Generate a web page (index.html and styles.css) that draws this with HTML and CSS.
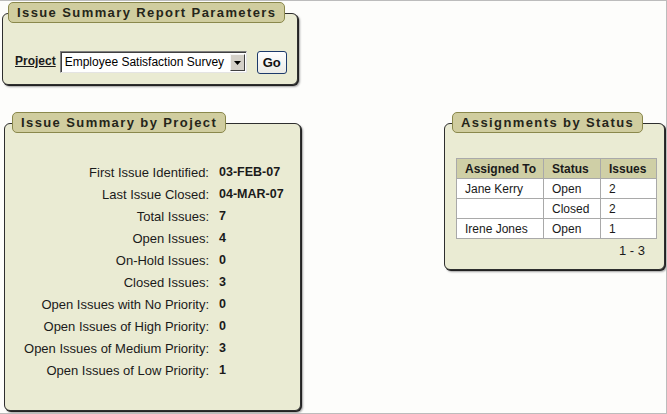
FILE: index.html
```html
<html lang="en">
<head>
    <meta charset="UTF-8">
    <title>Issue Summary Report</title>
    <link rel="stylesheet" href="styles.css">
</head>
<body>

<div class="region region-params">
    <div class="region-title">Issue Summary Report Parameters</div>
    <div class="region-body params">
        <a class="field-label" href="#">Project</a>
        <div class="select">
            <span class="select-text">Employee Satisfaction Survey</span>
            <span class="select-arrow">
                <svg width="7" height="4" viewBox="0 0 7 4"><path d="M0 0h7L3.5 4z" fill="#000"/></svg>
            </span>
        </div>
        <button class="go-btn">Go</button>
    </div>
</div>

<div class="summary-row">
    <div class="region region-summary">
        <div class="region-title">Issue Summary by Project</div>
        <div class="region-body stats">
            <span class="stat-label">First Issue Identified:</span><span class="stat-value">03-FEB-07</span>
            <span class="stat-label">Last Issue Closed:</span><span class="stat-value">04-MAR-07</span>
            <span class="stat-label">Total Issues:</span><span class="stat-value">7</span>
            <span class="stat-label">Open Issues:</span><span class="stat-value">4</span>
            <span class="stat-label">On-Hold Issues:</span><span class="stat-value">0</span>
            <span class="stat-label">Closed Issues:</span><span class="stat-value">3</span>
            <span class="stat-label">Open Issues with No Priority:</span><span class="stat-value">0</span>
            <span class="stat-label">Open Issues of High Priority:</span><span class="stat-value">0</span>
            <span class="stat-label">Open Issues of Medium Priority:</span><span class="stat-value">3</span>
            <span class="stat-label">Open Issues of Low Priority:</span><span class="stat-value">1</span>
        </div>
    </div>

    <div class="region region-status">
        <div class="region-title">Assignments by Status</div>
        <div class="region-body status">
            <table class="status-table">
                <thead>
                    <tr>
                        <th class="col-assigned">Assigned To</th>
                        <th class="col-status">Status</th>
                        <th class="col-issues">Issues</th>
                    </tr>
                </thead>
                <tbody>
                    <tr><td>Jane Kerry</td><td>Open</td><td>2</td></tr>
                    <tr><td></td><td>Closed</td><td>2</td></tr>
                    <tr><td>Irene Jones</td><td>Open</td><td>1</td></tr>
                </tbody>
            </table>
            <div class="pagination">1 - 3</div>
        </div>
    </div>
</div>

</body>
</html>
```

FILE: styles.css
```css
* {
    box-sizing: border-box;
}

body {
    margin: 0;
    width: 667px;
    height: 414px;
    border-top: 1px solid #bcbcbc;
    border-right: 1px solid #bcbcbc;
    border-bottom: 1px solid #bcbcbc;
    background-color: #fdfdfb;
    font-family: "Liberation Sans", Arial, sans-serif;
    font-size: 12px;
    color: #1a1a1a;
    overflow: hidden;
}

/* Regions */
.region {
    display: flex;
    flex-direction: column;
    align-items: flex-start;
}

.region-title {
    position: relative;
    z-index: 1;
    height: 21px;
    margin-left: 8px;
    padding: 0 8px;
    border: 1px solid #8a884c;
    border-radius: 5px;
    background-color: #d0cd9f;
    color: #25251a;
    font-size: 13px;
    font-weight: bold;
    letter-spacing: 1.4px;
    line-height: 19px;
    white-space: nowrap;
}

.region-body {
    margin-top: -10px;
    border: 1px solid #2e2e2e;
    border-radius: 6px;
    background-color: #eaebd3;
    box-shadow: 1px 1px 0 #222, 2px 2px 2px #a0a0a0;
}

.region-params {
    margin: 1px 0 0 2px;
    width: 296px;
}

.region-params .region-title {
    margin-left: 6px;
}

.params {
    width: 296px;
    height: 72px;
    display: flex;
    align-items: flex-start;
    padding: 37px 0 0 12px;
}

.field-label {
    font-weight: bold;
    font-size: 12px;
    color: #1a1a1a;
    line-height: 21px;
}

.select {
    display: flex;
    width: 187px;
    height: 22px;
    margin-left: 4px;
    border: 1px solid;
    border-color: #808080 #e4e4e4 #e4e4e4 #808080;
    background-color: #fff;
    box-shadow: inset 1px 1px 0 #404040;
}

.select-text {
    flex: 1;
    padding-left: 4px;
    line-height: 20px;
    font-size: 12px;
    color: #000;
    white-space: nowrap;
}

.select-arrow {
    width: 15px;
    height: 17px;
    margin: 2px 1px 0 0;
    display: flex;
    align-items: center;
    justify-content: center;
    background-color: #d4d0c8;
    border: 1px solid;
    border-color: #f4f4f4 #404040 #404040 #f4f4f4;
}

.go-btn {
    width: 30px;
    height: 23px;
    margin-left: 10px;
    padding: 0;
    border: 1px solid #1d3a6b;
    border-radius: 3px;
    background: linear-gradient(#ffffff, #ebebe6);
    font-family: "Liberation Sans", Arial, sans-serif;
    font-size: 13px;
    font-weight: bold;
    color: #111;
}

/* Second row */
.summary-row {
    display: flex;
    justify-content: space-between;
    align-items: flex-start;
    margin-top: 27px;
    padding: 0 1px 0 4px;
}

.region-summary .region-body {
    width: 297px;
    height: 288px;
}

.stats {
    display: grid;
    grid-template-columns: 204px auto;
    grid-auto-rows: 22px;
    column-gap: 10px;
    align-items: center;
    align-content: start;
    padding-top: 37px;
}

.stat-label {
    text-align: right;
    font-size: 13px;
    white-space: nowrap;
}

.stat-value {
    font-weight: bold;
    font-size: 12.5px;
}

.region-status .region-body {
    width: 221px;
    height: 147px;
}

.status {
    padding: 34px 7px 0 11px;
}

.status-table {
    width: 201px;
    table-layout: fixed;
    border-collapse: collapse;
    background-color: #fff;
}

.status-table th,
.status-table td {
    height: 20px;
    padding: 0 8px;
    border: 1px solid #a9a9a9;
    text-align: left;
    font-size: 12px;
    white-space: nowrap;
    overflow: hidden;
}

.status-table th {
    background-color: #cfcfa6;
    color: #1a1a1a;
}

.col-assigned {
    width: 87px;
}

.col-status {
    width: 57px;
}

.col-issues {
    width: 56px;
}

.pagination {
    margin-top: 5px;
    padding-right: 12px;
    text-align: right;
    font-size: 13px;
    line-height: 14px;
}
```
